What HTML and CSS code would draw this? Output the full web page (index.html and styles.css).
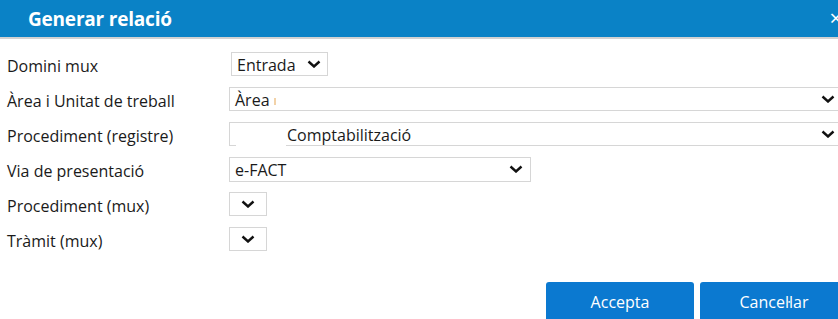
FILE: index.html
```html
<!DOCTYPE html>
<html lang="ca">
<head>
    <meta charset="UTF-8">
    <meta name="viewport" content="width=device-width, initial-scale=1.0">
    <title>Generar relació</title>
    <link rel="stylesheet" href="styles.css">
</head>
<body>
    <div class="dialog">
        <div class="dialog-header">
            <h2 class="dialog-title">Generar relació</h2>
            <span class="dialog-close">×</span>
        </div>

        <form class="dialog-body">
            <div class="form-row">
                <label class="form-label">Domini mux</label>
                <div class="select select-small">
                    <span class="select-text">Entrada</span>
                    <svg class="chevron" viewBox="0 0 14 8"><path d="M1.5 1.5 L7 6.5 L12.5 1.5"/></svg>
                </div>
            </div>

            <div class="form-row">
                <label class="form-label">Àrea i Unitat de treball</label>
                <div class="select select-full">
                    <span class="select-text">Àrea <span class="hidden-mark"></span></span>
                    <svg class="chevron" viewBox="0 0 14 8"><path d="M1.5 1.5 L7 6.5 L12.5 1.5"/></svg>
                </div>
            </div>

            <div class="form-row">
                <label class="form-label">Procediment (registre)</label>
                <div class="select select-full select-broken">
                    <span class="select-text select-indent">Comptabilització</span>
                    <svg class="chevron" viewBox="0 0 14 8"><path d="M1.5 1.5 L7 6.5 L12.5 1.5"/></svg>
                </div>
            </div>

            <div class="form-row">
                <label class="form-label">Via de presentació</label>
                <div class="select select-medium">
                    <span class="select-text">e-FACT</span>
                    <svg class="chevron" viewBox="0 0 14 8"><path d="M1.5 1.5 L7 6.5 L12.5 1.5"/></svg>
                </div>
            </div>

            <div class="form-row">
                <label class="form-label">Procediment (mux)</label>
                <div class="select select-empty">
                    <svg class="chevron" viewBox="0 0 14 8"><path d="M1.5 1.5 L7 6.5 L12.5 1.5"/></svg>
                </div>
            </div>

            <div class="form-row">
                <label class="form-label">Tràmit (mux)</label>
                <div class="select select-empty">
                    <svg class="chevron" viewBox="0 0 14 8"><path d="M1.5 1.5 L7 6.5 L12.5 1.5"/></svg>
                </div>
            </div>
        </form>

        <div class="dialog-footer">
            <button type="button" class="btn">Accepta</button>
            <button type="button" class="btn">Cancel·lar</button>
        </div>
    </div>
</body>
</html>
```

FILE: styles.css
```css
html, body {
    margin: 0;
    padding: 0;
    overflow: hidden;
}

body {
    font-family: 'Open Sans', 'DejaVu Sans', sans-serif;
    background-color: #fff;
    color: #1a1a1a;
    width: 838px;
    height: 319px;
}

.dialog {
    width: 852px;
}

.dialog-header {
    display: flex;
    justify-content: space-between;
    align-items: center;
    height: 37px;
    background-color: #0a82c6;
    border-bottom: 2px solid #d2d2d2;
    padding: 0 10px 0 28px;
}

.dialog-title {
    margin: 0;
    font-size: 19px;
    font-weight: 700;
    color: #fff;
    letter-spacing: -0.2px;
}

.dialog-close {
    color: #fff;
    font-size: 22px;
    line-height: 1;
    margin-top: -4px;
}

.dialog-body {
    display: flex;
    flex-direction: column;
    gap: 11px;
    padding: 13px 0 0 7px;
}

.form-row {
    display: flex;
    align-items: center;
    height: 24px;
}

.form-label {
    width: 222px;
    font-size: 16px;
    padding-top: 4px;
    flex-shrink: 0;
    white-space: nowrap;
}

.select {
    display: flex;
    align-items: center;
    justify-content: space-between;
    box-sizing: border-box;
    height: 24px;
    border: 1px solid #d6d6d6;
    padding: 0 7px 0 5px;
    font-size: 16px;
    background-color: #fff;
    position: relative;
}

.select-text {
    padding-top: 1px;
    white-space: nowrap;
}

.select-small {
    width: 97px;
    margin-left: 2px;
    padding-right: 6px;
}

.select-full {
    width: 615px;
}

.select-full .chevron {
    margin-right: 1px;
}

.select-medium {
    width: 302px;
    height: 25px;
}

.select-empty {
    width: 38px;
    justify-content: center;
    padding: 0;
}

.select-indent {
    padding-left: 52px;
}

.select-broken::after {
    content: '';
    position: absolute;
    left: 6px;
    bottom: -1px;
    width: 50px;
    height: 1px;
    background-color: #fff;
}

.hidden-mark {
    display: inline-block;
    width: 2px;
    height: 7px;
    background-color: #f2d2a8;
    vertical-align: 1px;
}

.chevron {
    width: 14px;
    height: 8px;
    fill: none;
    stroke: #111;
    stroke-width: 2.4;
    flex-shrink: 0;
}

.dialog-footer {
    display: flex;
    gap: 6px;
    padding: 31px 0 0 546px;
}

.btn {
    width: 148px;
    height: 40px;
    background-color: #0b79d0;
    color: #fff;
    border: none;
    border-radius: 3px;
    font-family: 'Open Sans', 'DejaVu Sans', sans-serif;
    font-size: 16px;
    padding: 0;
    cursor: pointer;
}
```
